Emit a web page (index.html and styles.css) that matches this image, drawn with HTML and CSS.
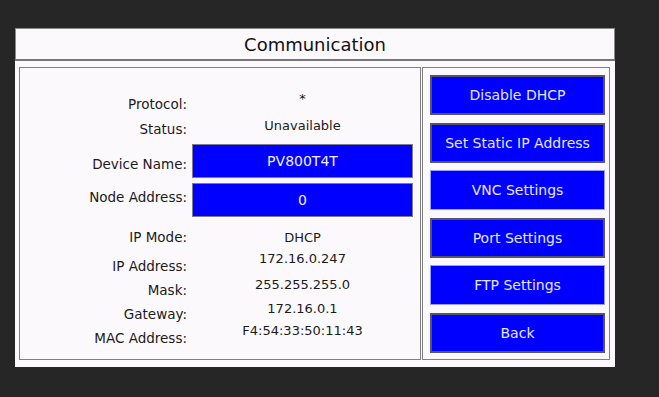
FILE: index.html
```html
<!DOCTYPE html>
<html lang="en">
<head>
    <meta charset="UTF-8">
    <meta name="viewport" content="width=device-width, initial-scale=1.0">
    <title>Communication</title>
    <link rel="stylesheet" href="styles.css">
</head>
<body>
    <div class="screen">
        <div class="title-bar">Communication</div>
        <div class="content">
            <div class="info-box">
                <div class="row">
                    <div class="label">Protocol:</div>
                    <div class="value lift-m">*</div>
                </div>
                <div class="row status">
                    <div class="label">Status:</div>
                    <div class="value lift-s">Unavailable</div>
                </div>
                <div class="row field-row">
                    <div class="label drop">Device Name:</div>
                    <div class="field">PV800T4T</div>
                </div>
                <div class="row field-row">
                    <div class="label lift-s">Node Address:</div>
                    <div class="field">0</div>
                </div>
                <div class="row mode">
                    <div class="label">IP Mode:</div>
                    <div class="value">DHCP</div>
                </div>
                <div class="row addr">
                    <div class="label">IP Address:</div>
                    <div class="value lift-l">172.16.0.247</div>
                </div>
                <div class="row">
                    <div class="label">Mask:</div>
                    <div class="value lift-m">255.255.255.0</div>
                </div>
                <div class="row">
                    <div class="label">Gateway:</div>
                    <div class="value lift-m">172.16.0.1</div>
                </div>
                <div class="row">
                    <div class="label">MAC Address:</div>
                    <div class="value lift-xl">F4:54:33:50:11:43</div>
                </div>
            </div>
            <div class="action-box">
                <button class="btn">Disable DHCP</button>
                <button class="btn">Set Static IP Address</button>
                <button class="btn light">VNC Settings</button>
                <button class="btn">Port Settings</button>
                <button class="btn light">FTP Settings</button>
                <button class="btn">Back</button>
            </div>
        </div>
    </div>
</body>
</html>
```

FILE: styles.css
```css
body {
    margin: 0;
    background: #262626;
    font-family: "DejaVu Sans", sans-serif;
    color: #1a1a1a;
}
.screen {
    margin: 28px 0 0 15px;
    width: 600px;
    height: 339px;
    background: #fcf9fc;
    display: flex;
    flex-direction: column;
}
.title-bar {
    height: 33px;
    box-sizing: border-box;
    border: 1px solid #8a8a8a;
    border-bottom: 2px solid #777;
    display: flex;
    align-items: center;
    justify-content: center;
    font-size: 18px;
    color: #111;
}
.content {
    flex: 1;
    display: flex;
    gap: 1px;
    padding: 6px 5px 7px 4px;
}
.info-box {
    width: 402px;
    box-sizing: border-box;
    border: 1px solid #808080;
    padding-top: 24px;
}
.row {
    display: flex;
    align-items: center;
    height: 24px;
}
.row.status {
    height: 26px;
}
.row.field-row {
    height: 34px;
    margin-top: 2px;
}
.row.field-row + .field-row {
    margin-top: 5px;
}
.row.mode {
    margin-top: 8px;
}
.row.addr {
    margin-top: 4px;
    height: 25px;
}
.label {
    width: 167px;
    text-align: right;
    font-size: 13.5px;
}
.label.drop {
    padding-top: 6px;
}
.value {
    width: 221px;
    margin-left: 5px;
    text-align: center;
    font-size: 13px;
}
.lift-s { margin-bottom: 7px; }
.lift-m { margin-bottom: 12px; }
.lift-l { margin-bottom: 15px; }
.lift-xl { margin-bottom: 16px; }
.field {
    width: 221px;
    height: 34px;
    margin-left: 5px;
    box-sizing: border-box;
    background: #0000ff;
    border: 1px solid #7c7c8c;
    color: #f0f0ff;
    font-size: 14px;
    display: flex;
    align-items: center;
    justify-content: center;
}
.action-box {
    width: 188px;
    box-sizing: border-box;
    border: 1px solid #808080;
    padding: 7px 4px 6px 7px;
    display: flex;
    flex-direction: column;
    justify-content: space-between;
}
.btn {
    height: 40px;
    width: 175px;
    box-sizing: border-box;
    background: #0000ff;
    border: 2px solid #55556a;
    color: #e6e6ff;
    font-family: "DejaVu Sans", sans-serif;
    font-size: 14px;
    padding: 0;
}
.btn.light {
    border: 1px solid #9a9aff;
}
```
